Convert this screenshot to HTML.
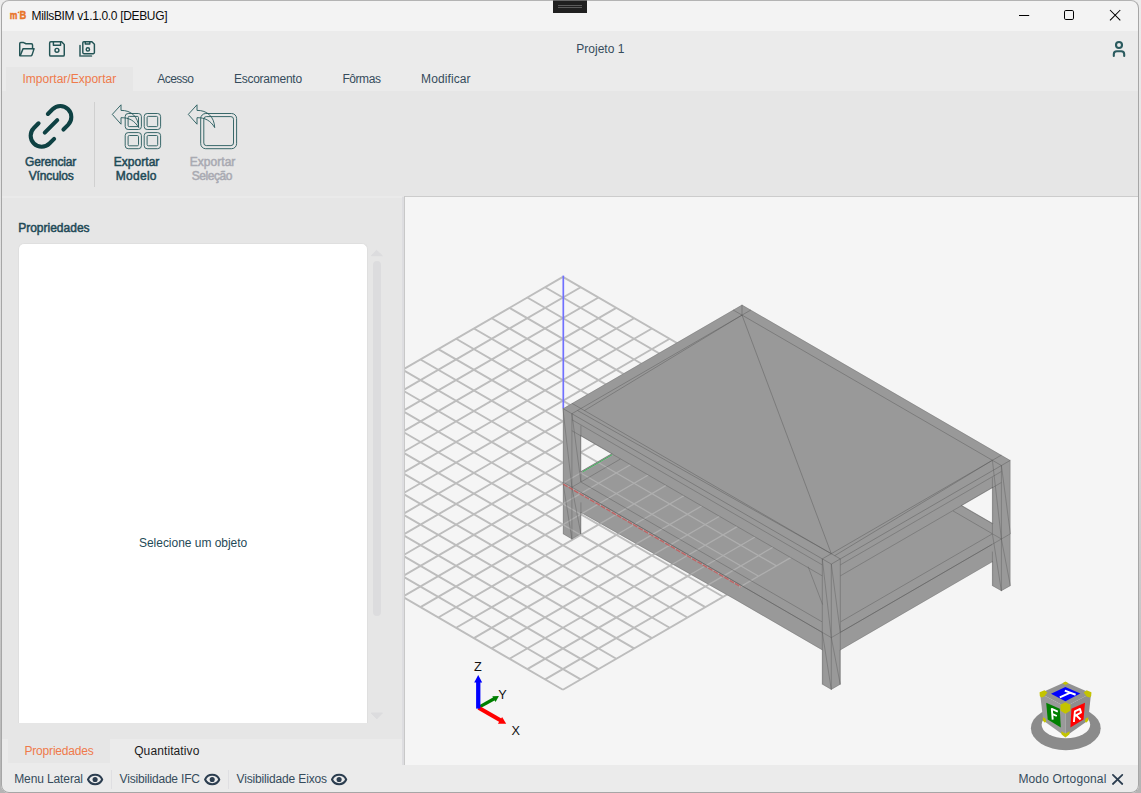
<!DOCTYPE html>
<html><head><meta charset="utf-8"><title>MillsBIM</title>
<style>
*{margin:0;padding:0;box-sizing:border-box}
html,body{width:1141px;height:793px;overflow:hidden;background:#d9d9d9}
body{font-family:"Liberation Sans",sans-serif;font-size:12px;position:relative;color:#2c3e4e}
#shadow{position:absolute;left:0;top:0;width:1141px;height:793px;background:linear-gradient(180deg,#ececec 0,#d6d6d6 60%,#b4b4b4 100%)}
#win{position:absolute;left:1px;top:0;width:1138px;height:793px;border-radius:8px;background:#ebebeb;overflow:hidden}
#c{position:absolute;left:-1px;top:0;width:1141px;height:793px}
#frame{position:absolute;left:1px;top:0;width:1138px;height:793px;border-radius:8px;border:1px solid #a6a6a6;border-top-color:#b3b3b3}
.abs{position:absolute}
.t{position:absolute;white-space:nowrap;font-size:12px;line-height:14px;height:14px}
.b{font-weight:700}
.or{color:#ef7a4b}
.teal{color:#1f4a57}
.dk{color:#364c5c}
svg{position:absolute;overflow:visible}
</style></head>
<body>
<div id="shadow"></div>
<div id="win"><div id="c">
<div class="abs" style="left:0px;top:0px;width:1141px;height:31px;background:#f3f3f3;"></div>
<div class="abs" style="left:6px;top:67px;width:127px;height:24px;background:#e6e6e6;"></div>
<div class="abs" style="left:0px;top:91px;width:1141px;height:106px;background:#e6e6e6;"></div>
<div class="abs" style="left:0px;top:197px;width:402px;height:542px;background:#e6e6e6;"></div>
<div class="abs" style="left:0px;top:196px;width:402px;height:2px;background:#eaeaea;"></div>
<div class="abs" style="left:0px;top:739px;width:402px;height:26px;background:#ebebeb;"></div>
<div class="abs" style="left:8.2px;top:739px;width:101.8px;height:23.5px;background:#e6e6e6;"></div>
<div class="abs" style="left:402px;top:197px;width:2px;height:568px;background:#dddde0;"></div>
<div class="abs" style="left:404px;top:196px;width:737px;height:1px;background:#cccccc;"></div>
<div class="abs" style="left:403.7px;top:196px;width:1.3px;height:569px;background:#c8c8c8;"></div>
<div class="abs" style="left:0px;top:765px;width:1141px;height:28px;background:#ebebeb;"></div>
<div class="abs" style="left:18px;top:242.7px;width:349.5px;height:480px;background:#ffffff;border-radius:6px 6px 0 0;border:1px solid #dfdfdf;border-bottom:none;"></div>
<div class="abs" style="left:373.2px;top:260.5px;width:7.8px;height:355.3px;background:#dcdcde;border-radius:4px;"></div>
<svg style="left:370px;top:249px" width="14" height="8"><path d="M1.3 6.7 L6.5 1.3 L12.3 6.7 Z" fill="#dcdcde" stroke="#dcdcde" stroke-width="1" stroke-linejoin="round"/></svg>
<svg style="left:370px;top:712px" width="14" height="8"><path d="M1.2 1 L12.4 1 L6.8 6.8 Z" fill="#dcdcde" stroke="#dcdcde" stroke-width="1" stroke-linejoin="round"/></svg>
<div class="abs" style="left:553px;top:0px;width:34px;height:12.5px;background:#1f1f1f;"></div>
<div class="abs" style="left:553px;top:0px;width:34px;height:1px;background:#676767;"></div>
<div class="abs" style="left:558px;top:5px;width:24px;height:1px;background:#5a5a5a;"></div>
<div class="abs" style="left:558px;top:7px;width:24px;height:1px;background:#5a5a5a;"></div>
<div class="abs" style="left:94px;top:102px;width:1px;height:85px;background:#d0d0d0;"></div>
<div class="abs" style="left:111px;top:770px;width:1px;height:19px;background:#dfdfe2;"></div>
<div class="abs" style="left:228px;top:770px;width:1px;height:19px;background:#dfdfe2;"></div>
<svg style="left:405px;top:197px;background:#f5f5f5;overflow:hidden" width="736" height="568" viewBox="405 197 736 568">
<path d="M206.9 483.3 L562.9 276.9M206.9 483.3 L562.9 689.7M224.7 493.6 L580.7 287.2M224.7 473.0 L580.7 679.4M242.5 503.9 L598.5 297.5M242.5 462.7 L598.5 669.1M260.3 514.3 L616.3 307.9M260.3 452.3 L616.3 658.7M278.1 524.6 L634.1 318.2M278.1 442.0 L634.1 648.4M295.9 534.9 L651.9 328.5M295.9 431.7 L651.9 638.1M313.7 545.2 L669.7 338.8M313.7 421.4 L669.7 627.8M331.5 555.5 L687.5 349.1M331.5 411.1 L687.5 617.5M349.3 565.9 L705.3 359.5M349.3 400.7 L705.3 607.1M367.1 576.2 L723.1 369.8M367.1 390.4 L723.1 596.8M384.9 586.5 L740.9 380.1M384.9 380.1 L740.9 586.5M402.7 596.8 L758.7 390.4M402.7 369.8 L758.7 576.2M420.5 607.1 L776.5 400.7M420.5 359.5 L776.5 565.9M438.3 617.5 L794.3 411.1M438.3 349.1 L794.3 555.5M456.1 627.8 L812.1 421.4M456.1 338.8 L812.1 545.2M473.9 638.1 L829.9 431.7M473.9 328.5 L829.9 534.9M491.7 648.4 L847.7 442.0M491.7 318.2 L847.7 524.6M509.5 658.7 L865.5 452.3M509.5 307.9 L865.5 514.3M527.3 669.1 L883.3 462.7M527.3 297.5 L883.3 503.9M545.1 679.4 L901.1 473.0M545.1 287.2 L901.1 493.6M562.9 689.7 L918.9 483.3M562.9 276.9 L918.9 483.3" stroke="#606060" stroke-opacity=".38" stroke-width="1.9" fill="none"/>
<path d="M563.3 275.6 V408.6" stroke="#7070ff" stroke-width="1.7" fill="none"/>
<path d="M562.9 408.5 L562.9 534.1 L571.9 539.3 L580.9 534.1 L580.9 512.7 L734.7 599.4 L822.3 650.2 L822.3 684.5 L831.3 689.7 L840.3 684.5 L840.3 650.2 L992.3 562.1 L992.4 585.9 L1001.4 591.1 L1010.4 585.9 L1010.4 460.3 L742.0 304.7ZM961.7 505.6 L992.4 487.8 L992.4 523.3ZM580.9 436.0 L611.6 453.7 L580.9 471.5 L580.9 471.5Z" fill="#999999" fill-rule="evenodd"/>
<path d="M563.3 408.7 L563.3 533.9 L571.9 538.9 L580.5 533.9 L580.6 512.7 L580.6 512.7 L580.6 512.6 L580.6 512.6 L580.6 512.6 L580.6 512.6 L580.7 512.5 L580.7 512.5 L580.7 512.5 L580.7 512.4 L580.8 512.4 L580.8 512.4 L580.8 512.4 L580.9 512.4 L580.9 512.4 L580.9 512.4 L581.0 512.4 L581.0 512.4 L581.0 512.4 L581.1 512.4 L581.1 512.4 L581.1 512.4 L734.9 599.1 L734.9 599.1 L822.5 649.9 L822.5 649.9 L822.5 649.9 L822.6 650.0 L822.6 650.0 L822.6 650.0 L822.6 650.0 L822.6 650.1 L822.6 650.1 L822.7 650.1 L822.7 650.2 L822.7 650.2 L822.7 684.3 L831.3 689.3 L840.0 684.3 L840.0 650.2 L840.0 650.2 L840.0 650.1 L840.0 650.1 L840.0 650.1 L840.0 650.0 L840.0 650.0 L840.1 650.0 L840.1 650.0 L840.1 649.9 L840.1 649.9 L840.2 649.9 L992.2 561.8 L992.2 561.8 L992.2 561.7 L992.3 561.7 L992.3 561.7 L992.3 561.7 L992.4 561.7 L992.4 561.7 L992.4 561.7 L992.5 561.7 L992.5 561.8 L992.5 561.8 L992.6 561.8 L992.6 561.8 L992.6 561.8 L992.6 561.9 L992.7 561.9 L992.7 561.9 L992.7 562.0 L992.7 562.0 L992.7 562.0 L992.7 562.1 L992.8 585.7 L1001.4 590.7 L1010.0 585.7 L1010.0 460.5 L742.0 305.1ZM961.5 505.9 L961.5 505.8 L961.5 505.8 L961.5 505.8 L961.4 505.8 L961.4 505.7 L961.4 505.7 L961.4 505.7 L961.4 505.6 L961.4 505.6 L961.4 505.6 L961.4 505.5 L961.4 505.5 L961.4 505.5 L961.4 505.4 L961.4 505.4 L961.4 505.4 L961.4 505.3 L961.5 505.3 L961.5 505.3 L961.5 505.3 L961.5 505.3 L992.2 487.5 L992.3 487.5 L992.3 487.5 L992.3 487.5 L992.4 487.5 L992.4 487.5 L992.4 487.5 L992.5 487.5 L992.5 487.5 L992.5 487.5 L992.6 487.5 L992.6 487.5 L992.6 487.5 L992.7 487.6 L992.7 487.6 L992.7 487.6 L992.7 487.6 L992.7 487.7 L992.7 487.7 L992.8 487.7 L992.8 487.8 L992.8 487.8 L992.7 523.3 L992.7 523.4 L992.7 523.4 L992.7 523.5 L992.7 523.5 L992.7 523.5 L992.7 523.5 L992.6 523.6 L992.6 523.6 L992.6 523.6 L992.6 523.6 L992.5 523.7 L992.5 523.7 L992.5 523.7 L992.4 523.7 L992.4 523.7 L992.4 523.7 L992.3 523.7 L992.3 523.7 L992.3 523.7 L992.2 523.7 L992.2 523.6ZM580.5 436.0 L580.5 436.0 L580.5 435.9 L580.5 435.9 L580.6 435.9 L580.6 435.8 L580.6 435.8 L580.6 435.8 L580.6 435.8 L580.7 435.7 L580.7 435.7 L580.7 435.7 L580.8 435.7 L580.8 435.7 L580.8 435.7 L580.9 435.7 L580.9 435.7 L580.9 435.7 L581.0 435.7 L581.0 435.7 L581.0 435.7 L581.1 435.7 L611.8 453.4 L611.8 453.5 L611.8 453.5 L611.8 453.5 L611.9 453.5 L611.9 453.6 L611.9 453.6 L611.9 453.6 L611.9 453.7 L611.9 453.7 L611.9 453.7 L611.9 453.8 L611.9 453.8 L611.9 453.8 L611.9 453.9 L611.9 453.9 L611.9 453.9 L611.9 454.0 L611.8 454.0 L611.8 454.0 L611.8 454.0 L611.8 454.1 L581.1 471.8 L581.1 471.9 L581.0 471.9 L581.0 471.9 L581.0 471.9 L580.9 471.9 L580.9 471.9 L580.9 471.9 L580.8 471.9 L580.8 471.9 L580.8 471.9 L580.7 471.8 L580.7 471.8 L580.7 471.8 L580.6 471.7 L580.6 471.7 L580.6 471.7 L580.6 471.7 L580.6 471.6 L580.5 471.6 L580.5 471.6 L580.5 471.5 L580.5 471.5Z" fill="none" stroke="#555" stroke-opacity=".3" stroke-width=".7"/>
<path d="M562.9 524.6 L580.1 534.6M562.9 503.9 L580.9 514.4M562.9 483.3 L612.7 454.4M562.9 483.3 L740.9 586.5M562.9 503.9 L630.5 464.7M579.6 472.3 L758.7 576.2M562.9 524.6 L580.9 514.1M582.2 513.4 L648.3 475.0M597.4 462.0 L776.5 565.9M600.2 523.6 L666.1 485.4M618.3 533.8 L683.9 495.7M636.3 543.9 L701.7 506.0M654.4 554.1 L719.5 516.3M672.4 564.3 L737.3 526.6M690.5 574.5 L755.1 537.0M708.5 584.6 L772.9 547.3M739.3 587.4 L790.7 557.6" stroke="#ffffff" stroke-width="1.3" fill="none" opacity=".21"/>
<path d="M581.2 482.2 L822.0 621.8M840.6 621.8 L992.1 534.0M992.1 533.6 L953.0 510.9M620.3 459.1 L581.2 481.8M581.2 492.6 L822.0 632.2M840.6 632.2 L992.1 544.4M992.1 523.2 L962.0 505.7M611.3 453.9 L581.2 471.4" stroke="#555" stroke-width=".75" fill="none" opacity=".55"/>
<path d="M571.9 419.7 L822.3 564.9M840.3 564.9 L1001.4 471.5M571.9 430.7 L822.3 575.9M840.3 575.9 L1001.4 482.5M571.9 487.2 L822.3 632.4M840.3 632.4 L1001.4 539.0M571.9 539.3 L571.9 413.7M580.9 534.1 L580.9 502.4M580.9 482.0 L580.9 425.5M822.3 684.5 L822.3 558.9M831.3 689.7 L831.3 564.1M840.3 684.5 L840.3 558.9M1001.4 591.1 L1001.4 465.5M992.4 585.9 L992.4 551.6M992.4 533.8 L992.4 477.3M562.9 482.0 L571.9 487.2M571.9 487.2 L580.9 482.0M822.3 632.4 L831.3 637.6M831.3 637.6 L840.3 632.4M992.4 533.8 L1001.4 539.0M1001.4 539.0 L1010.4 533.8M562.9 408.5 L571.9 487.2M571.9 413.7 L580.9 482.0M562.9 482.0 L571.9 539.3M571.9 487.2 L580.9 534.1M822.3 558.9 L831.3 637.6M831.3 564.1 L840.3 632.4M822.3 632.4 L831.3 689.7M831.3 637.6 L840.3 684.5M992.4 460.3 L1001.4 539.0M1001.4 465.5 L1010.4 533.8M992.4 533.8 L1001.4 591.1M1001.4 539.0 L1010.4 585.9M808.1 566.6 L822.6 604.5" stroke="#555" stroke-width=".75" fill="none" opacity=".52"/>
<path d="M562.9 408.5 L831.3 564.1M831.3 564.1 L1010.4 460.3M580.9 408.5 L831.3 553.7M831.3 553.7 L992.4 460.3M992.4 460.3 L742.0 315.1M742.0 315.1 L580.9 408.5M571.9 413.7 L580.9 408.5M571.9 403.3 L580.9 408.5M751.0 309.9 L742.0 315.1M733.0 309.9 L742.0 315.1M822.3 558.9 L831.3 553.7M840.3 558.9 L831.3 553.7M1001.4 455.1 L992.4 460.3M1001.4 465.5 L992.4 460.3M742.0 315.1 L831.3 553.7M742.0 315.1 L584.4 410.6M742.0 304.7 L742.0 315.1M577.5 410.5 L831.3 553.7M834.7 555.7 L992.4 460.3" stroke="#555" stroke-width=".75" fill="none" opacity=".58"/>
<path d="M563.3 484.1 L740.9 586.8" stroke="#cc4848" stroke-width="1.4" fill="none" opacity=".7" stroke-dasharray="5 1.2"/>
<path d="M582.5 471.9 L612.2 454.7" stroke="#2db84d" stroke-width="1" fill="none" opacity=".85"/>
<g><path d="M478.2 707.6 L494.6 698.5" stroke="#007f00" stroke-width="3.3" fill="none"/><path d="M498.9 696.1 L495.6 701.9 L492.3 696.2 Z" fill="#007f00"/><path d="M478.6 707.8 L501.3 720.8" stroke="#ff0000" stroke-width="4.2" fill="none"/><path d="M502.1 717.0 L506.2 723.7 L497.9 723.7 Z" fill="#ff0000"/><path d="M478.25 708.6 V681.8" stroke="#0000ff" stroke-width="4.3" fill="none"/><path d="M474.2 682.4 L478.2 675 L482.2 682.4 Z" fill="#0000ff"/><g font-family="Liberation Sans, sans-serif" font-size="12.7" fill="#111"><text x="474" y="670.7">Z</text><text x="498.2" y="699">Y</text><text x="511.4" y="735.3">X</text></g><ellipse cx="1065.8" cy="728.2" rx="34.9" ry="22" fill="#8b8b8b"/><ellipse cx="1065.9" cy="724.7" rx="24.3" ry="13.6" fill="#f7f7f7"/><polygon points="1065.4,682.1 1091.1,693.2 1065.4,706.8 1040.1,693.2" fill="#929292"/><polygon points="1040.1,693.2 1065.4,706.8 1065.4,736.6 1043.2,720.4" fill="#9a9a9a"/><polygon points="1091.1,693.2 1088.1,720.4 1065.4,736.6 1065.4,706.8" fill="#8d8d8d"/><polygon points="1051,693.7 1065.4,686.9 1080.3,693.5 1065.4,701.3" fill="#0000ff"/><polygon points="1046.2,702.8 1059.8,708.8 1060.8,727.5 1047.7,719.4" fill="#008000"/><polygon points="1071.4,708.8 1085,702.8 1083.5,719.4 1070.4,727.5" fill="#ff0000"/><g stroke="#fff" stroke-width="2" fill="none" stroke-linecap="butt" stroke-linejoin="round"><path d="M1064.8 690.6 L1075.6 694.8 M1070.3 692.6 L1059.8 697.3"/><path d="M1057.8 711.6 L1051.8 708.9 L1052.7 719.6 M1052.1 713.9 L1056.8 716" stroke-width="1.9"/><path d="M1073.9 722 L1074.9 711.4 L1080 708.9 L1081 712.5 L1075 715.9 M1076.6 715.6 L1080.6 719.5" stroke-width="1.9"/></g><polygon points="1062.4,683.3 1065.4,681.6 1068.5,683.3 1065.4,685" fill="#c4c400"/><polygon points="1039.6,692.3 1044.5,690.2 1047.4,692.6 1044.4,696.4 1041.3,697.6 1039.8,696" fill="#c4c400"/><polygon points="1091.4,692.3 1086.6,690.2 1083.7,692.6 1086.7,696.4 1089.8,697.6 1091.2,696" fill="#c4c400"/><polygon points="1060.4,704.8 1065.4,702.2 1070.5,704.8 1070.3,710.8 1065.4,713.8 1060.6,710.8" fill="#c4c400"/><polygon points="1042.8,717.3 1045.4,718.6 1046.3,721.8 1044.3,722.6 1043,720.5" fill="#c4c400"/><polygon points="1088.3,717.3 1085.7,718.6 1084.8,721.8 1086.8,722.6 1088.1,720.5" fill="#c4c400"/><polygon points="1061.2,731.2 1065.4,733.6 1069.7,731.2 1069.3,734.5 1065.4,737.6 1061.6,734.5" fill="#c4c400"/></g>
</svg>
<svg style="left:0;top:0" width="1141" height="793" viewBox="0 0 1141 793" ><g fill="none" stroke="#235455" stroke-width="1.45" stroke-linejoin="round" stroke-linecap="round"><path d="M19.75 55.6 V43.6 Q19.75 42.55 20.8 42.55 H23.6 L26 43.75 H31.4 Q32.55 43.75 32.55 44.9 V48.4"/><path d="M20.1 55.85 L23.1 48.65 H34.1 L32 55.1 Q31.7 55.85 30.9 55.85 Z"/></g><g fill="none" stroke="#235455" stroke-width="1.45" stroke-linejoin="round"><path d="M50.8 41.75 H61.6 L64.25 44.4 V54.9 Q64.25 56.05 63.1 56.05 H50.8 Q49.65 56.05 49.65 54.9 V42.9 Q49.65 41.75 50.8 41.75 Z"/><path d="M53.4 41.75 V45.2 H60.6 V41.75"/><circle cx="56.95" cy="50.3" r="1.95"/></g><g fill="none" stroke="#235455" stroke-width="1.45" stroke-linejoin="round"><path d="M83.9 41.75 H91.9 L94.4 44.3 V52.6 Q94.4 53.7 93.3 53.7 H83.9 Q82.8 53.7 82.8 52.6 V42.85 Q82.8 41.75 83.9 41.75 Z"/><path d="M85.3 41.75 V44.0 H89.8 V41.75"/><circle cx="87.85" cy="49.4" r="1.65"/></g><path d="M80 45.6 V56 H91.4" fill="none" stroke="#235455" stroke-width="1.7" stroke-linecap="round" stroke-linejoin="round" opacity=".85"/><g fill="none" stroke="#2b5b5f" stroke-width="2.1" stroke-linecap="round"><circle cx="1119" cy="44.95" r="3"/><path d="M1113.8 56 V54.2 A3 3 0 0 1 1116.8 51.2 H1121.2 A3 3 0 0 1 1124.2 54.2 V56"/></g><g fill="none" stroke="#000" stroke-width="1"><path d="M1019 15.5 H1029.2"/><rect x="1064.5" y="10.5" width="9" height="9" rx="1.3"/><path d="M1110 10 L1120.3 20.3 M1120.3 10 L1110 20.3" stroke-width="1.05"/></g><g fill="#e8742a" stroke="#e8742a" stroke-width=".45" font-family="Liberation Sans, sans-serif" font-weight="700"><text x="0" y="0" font-size="10.7" transform="translate(9.8,18.95) scale(0.8,1)">m</text><text x="0" y="0" font-size="10.9" transform="translate(19.6,18.95) scale(0.86,1)">B</text><circle cx="18.4" cy="12.4" r="0.6"/></g><g transform="translate(51,126.4) rotate(-45) scale(2.2) translate(-12,-12)" fill="none" stroke="#0e4143" stroke-width="1.85" stroke-linecap="round" stroke-linejoin="round"><path d="M15 7h3a5 5 0 0 1 5 5 5 5 0 0 1-5 5h-3m-6 0H6a5 5 0 0 1-5-5 5 5 0 0 1 5-5h3"/><line x1="8" y1="12" x2="16" y2="12"/></g><g fill="none" stroke="#25595b" stroke-width="0.9" stroke-linejoin="round"><rect x="125.2" y="113.5" width="16.20" height="16.00" rx="3"/><rect x="128.1" y="116.4" width="10.40" height="10.20" rx="1.2"/><rect x="144.2" y="113.5" width="16.40" height="16.00" rx="3"/><rect x="147.1" y="116.4" width="10.60" height="10.20" rx="1.2"/><rect x="125.2" y="132.6" width="16.20" height="16.10" rx="3"/><rect x="128.1" y="135.5" width="10.40" height="10.30" rx="1.2"/><rect x="144.2" y="132.6" width="16.40" height="16.10" rx="3"/><rect x="147.1" y="135.5" width="10.60" height="10.30" rx="1.2"/><path transform="translate(0,0)" d="M112.3 114.4 L121 104.8 V110.4 C131 110.2 138.2 116.5 138.7 127.6 C134.5 120.5 129 117.6 121 117.7 V124.2 Z" fill="none"/><rect x="200.7" y="113.5" width="35.90" height="35.20" rx="5"/><rect x="203.79999999999998" y="116.6" width="29.70" height="29.00" rx="2.6"/><path transform="translate(76,0)" d="M112.3 114.4 L121 104.8 V110.4 C131 110.2 138.2 116.5 138.7 127.6 C134.5 120.5 129 117.6 121 117.7 V124.2 Z" fill="none"/></g><path d="M88.0 779.5 A7.7 7.7 0 0 1 102.19999999999999 779.5 A7.7 7.7 0 0 1 88.0 779.5 Z" fill="none" stroke="#2c3e50" stroke-width="2" stroke-linejoin="round"/><circle cx="95.1" cy="779.5" r="2.55" fill="#2c3e50"/><path d="M205.1 779.5 A7.7 7.7 0 0 1 219.29999999999998 779.5 A7.7 7.7 0 0 1 205.1 779.5 Z" fill="none" stroke="#2c3e50" stroke-width="2" stroke-linejoin="round"/><circle cx="212.2" cy="779.5" r="2.55" fill="#2c3e50"/><path d="M332.0 779.5 A7.7 7.7 0 0 1 346.20000000000005 779.5 A7.7 7.7 0 0 1 332.0 779.5 Z" fill="none" stroke="#2c3e50" stroke-width="2" stroke-linejoin="round"/><circle cx="339.1" cy="779.5" r="2.55" fill="#2c3e50"/><path d="M1112.9 774.9 L1122.3 784 M1122.3 774.9 L1112.9 784" stroke="#2c3e50" stroke-width="1.75" fill="none" stroke-linecap="round"/></svg>
<div class="t " style="left:31.6px;top:9px;letter-spacing:-0.34px;color:#0c0c0c;">MillsBIM v1.1.0.0 [DEBUG]</div>
<div class="t dk" style="left:576.3px;top:42px;">Projeto 1</div>
<div class="t or" style="left:22.5px;top:72px;letter-spacing:0.02px;">Importar/Exportar</div>
<div class="t dk" style="left:157.2px;top:72px;letter-spacing:-0.51px;">Acesso</div>
<div class="t dk" style="left:233.9px;top:72px;letter-spacing:-0.25px;">Escoramento</div>
<div class="t dk" style="left:342.4px;top:72px;letter-spacing:-0.43px;">Fôrmas</div>
<div class="t dk" style="left:421.1px;top:72px;letter-spacing:0.1px;">Modificar</div>
<div class="t teal" style="left:25.1px;top:155px;letter-spacing:-0.18px;-webkit-text-stroke:.5px currentColor;">Gerenciar</div>
<div class="t teal" style="left:28.7px;top:169px;letter-spacing:-0.14px;-webkit-text-stroke:.5px currentColor;">Vínculos</div>
<div class="t teal" style="left:113.8px;top:155px;letter-spacing:0.03px;-webkit-text-stroke:.5px currentColor;">Exportar</div>
<div class="t teal" style="left:115.8px;top:169px;letter-spacing:0.27px;-webkit-text-stroke:.5px currentColor;">Modelo</div>
<div class="t " style="left:189.8px;top:155px;letter-spacing:0.03px;color:#a9aab2;-webkit-text-stroke:.5px currentColor;">Exportar</div>
<div class="t " style="left:191.8px;top:169px;letter-spacing:-0.44px;color:#a9aab2;-webkit-text-stroke:.5px currentColor;">Seleção</div>
<div class="t teal" style="left:18.2px;top:221px;-webkit-text-stroke:.5px currentColor;">Propriedades</div>
<div class="t teal" style="left:139px;top:536px;letter-spacing:-0.03px;">Selecione um objeto</div>
<div class="t or" style="left:24.5px;top:744px;letter-spacing:-0.19px;">Propriedades</div>
<div class="t " style="left:134.2px;top:744px;letter-spacing:0.1px;color:#1b1b1b;">Quantitativo</div>
<div class="t dk" style="left:14.2px;top:772px;letter-spacing:-0.11px;">Menu Lateral</div>
<div class="t dk" style="left:119.6px;top:772px;letter-spacing:-0.185px;">Visibilidade IFC</div>
<div class="t dk" style="left:236.5px;top:772px;letter-spacing:-0.154px;">Visibilidade Eixos</div>
<div class="t dk" style="left:1018.4px;top:772px;letter-spacing:0.146px;">Modo Ortogonal</div>
</div></div>
<div id="frame"></div>
<div class="abs" style="left:553px;top:0;width:34px;height:1px;background:#646464"></div>
</body></html>
